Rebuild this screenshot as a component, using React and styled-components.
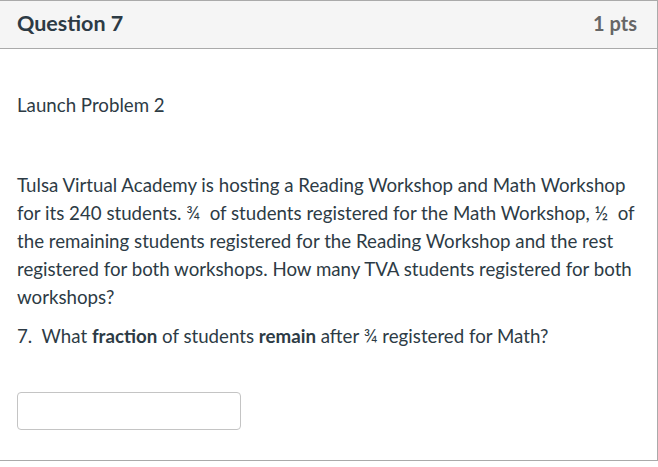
import React from 'react';
import styled, { createGlobalStyle } from 'styled-components';

const GlobalStyle = createGlobalStyle`
  html, body {
    margin: 0;
    padding: 0;
    background: #fff;
  }
  body {
    font-family: Lato, 'Open Sans', sans-serif;
    color: #2d3b45;
  }
`;

const Card = styled.div`
  width: 658px;
  box-sizing: border-box;
  border-top: 1px solid #aaa;
  border-right: 1px solid #aaa;
  border-bottom: 1px solid #aaa;
  background: #fff;
`;

const Header = styled.div`
  display: flex;
  align-items: center;
  justify-content: space-between;
  height: 48px;
  box-sizing: border-box;
  padding: 0 20px 4px 17px;
  background: #f5f5f5;
  border-bottom: 1px solid #aaa;
`;

const Title = styled.div`
  font-size: 21.5px;
  font-weight: 700;
  color: #2d3b45;
`;

const Points = styled.div`
  font-size: 20px;
  font-weight: 700;
  color: #666;
`;

const Body = styled.div`
  padding: 42px 20px 30px 17px;
`;

const Para = styled.p`
  margin: 0 0 ${(p) => p.$gap || 0}px;
  font-size: 18.7px;
  line-height: 28px;
`;

const AnswerInput = styled.input`
  display: block;
  width: 224px;
  height: 38px;
  box-sizing: border-box;
  margin-top: 42px;
  border: 1px solid #c4c4c4;
  border-radius: 4px;
  background: #fff;
  font: inherit;
`;

export default function App() {
  return (
    <>
      <GlobalStyle />
      <Card>
        <Header>
          <Title>Question 7</Title>
          <Points>1 pts</Points>
        </Header>
        <Body>
          <Para $gap={52}>Launch Problem 2</Para>
          <Para $gap={11}>
            Tulsa Virtual Academy is hosting a Reading Workshop and Math Workshop
            for its 240 students. ¾&nbsp; of students registered for the Math
            Workshop, ½&nbsp; of the remaining students registered for the Reading
            Workshop and the rest registered for both workshops. How many TVA
            students registered for both workshops?
          </Para>
          <Para>
            7.&nbsp; What <b>fraction</b> of students <b>remain</b> after ¾ registered
            for Math?
          </Para>
          <AnswerInput type="text" aria-label="answer" />
        </Body>
      </Card>
    </>
  );
}
